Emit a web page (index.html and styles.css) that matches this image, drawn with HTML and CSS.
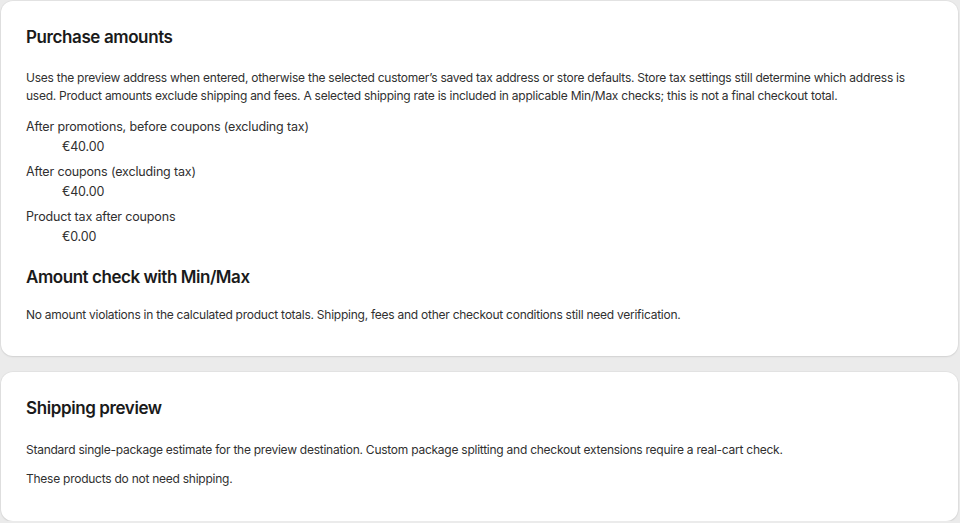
FILE: index.html
```html
<!DOCTYPE html>
<html lang="en">
<head>
<meta charset="utf-8">
<link rel="stylesheet" href="styles.css">
<title>Preview</title>
</head>
<body>
<div class="page">
  <section class="card card-amounts">
    <h2 class="title">Purchase amounts</h2>
    <p class="desc">Uses the preview address when entered, otherwise the selected customer’s saved tax address or store defaults. Store tax settings still determine which address is used. Product amounts exclude shipping and fees. A selected shipping rate is included in applicable Min/Max checks; this is not a final checkout total.</p>
    <dl class="amounts">
      <dt>After promotions, before coupons (excluding tax)</dt>
      <dd>€40.00</dd>
      <dt>After coupons (excluding tax)</dt>
      <dd>€40.00</dd>
      <dt>Product tax after coupons</dt>
      <dd>€0.00</dd>
    </dl>
    <h3 class="subtitle">Amount check with Min/Max</h3>
    <p class="desc">No amount violations in the calculated product totals. Shipping, fees and other checkout conditions still need verification.</p>
  </section>
  <section class="card card-shipping">
    <h2 class="title">Shipping preview</h2>
    <p class="desc">Standard single-package estimate for the preview destination. Custom package splitting and checkout extensions require a real-cart check.</p>
    <p class="desc">These products do not need shipping.</p>
  </section>
</div>
</body>
</html>
```
FILE: styles.css
```css
html, body {
  margin: 0;
  padding: 0;
  background: #ebebeb;
}
body {
  font-family: Inter, "Noto Sans", sans-serif;
  color: #303030;
}
.page {
  display: flex;
  flex-direction: column;
  gap: 16px;
  padding: 1px 2px 0 1px;
}
.card {
  background: #ffffff;
  border-radius: 12px;
  box-shadow: 0 1px 2px rgba(0,0,0,0.08), 0 0 0 1px rgba(0,0,0,0.03);
  padding: 24px 25px 32px 25px;
}
.card-shipping {
  padding-bottom: 33px;
}
.title {
  margin: 0 0 20px 0;
  font-size: 17px;
  font-weight: 600;
  letter-spacing: -0.4px;
  line-height: 24px;
  color: #1a1a1a;
}
.card-shipping .title {
  margin-bottom: 21px;
}
.subtitle {
  margin: 18px 0 17px 0;
  font-size: 17px;
  font-weight: 600;
  letter-spacing: -0.45px;
  line-height: 24px;
  color: #1a1a1a;
}
.desc {
  margin: 0 0 11px 0;
  font-size: 12px;
  letter-spacing: -0.25px;
  line-height: 18px;
}
.desc:last-child { margin-bottom: 0; }
.amounts {
  margin: 0;
  padding-top: 1px;
  font-size: 12.5px;
  letter-spacing: -0.15px;
  line-height: 20px;
}
.amounts dt {
  margin: 0;
}
.amounts dd {
  margin: 0 0 5px 36px;
}
```
